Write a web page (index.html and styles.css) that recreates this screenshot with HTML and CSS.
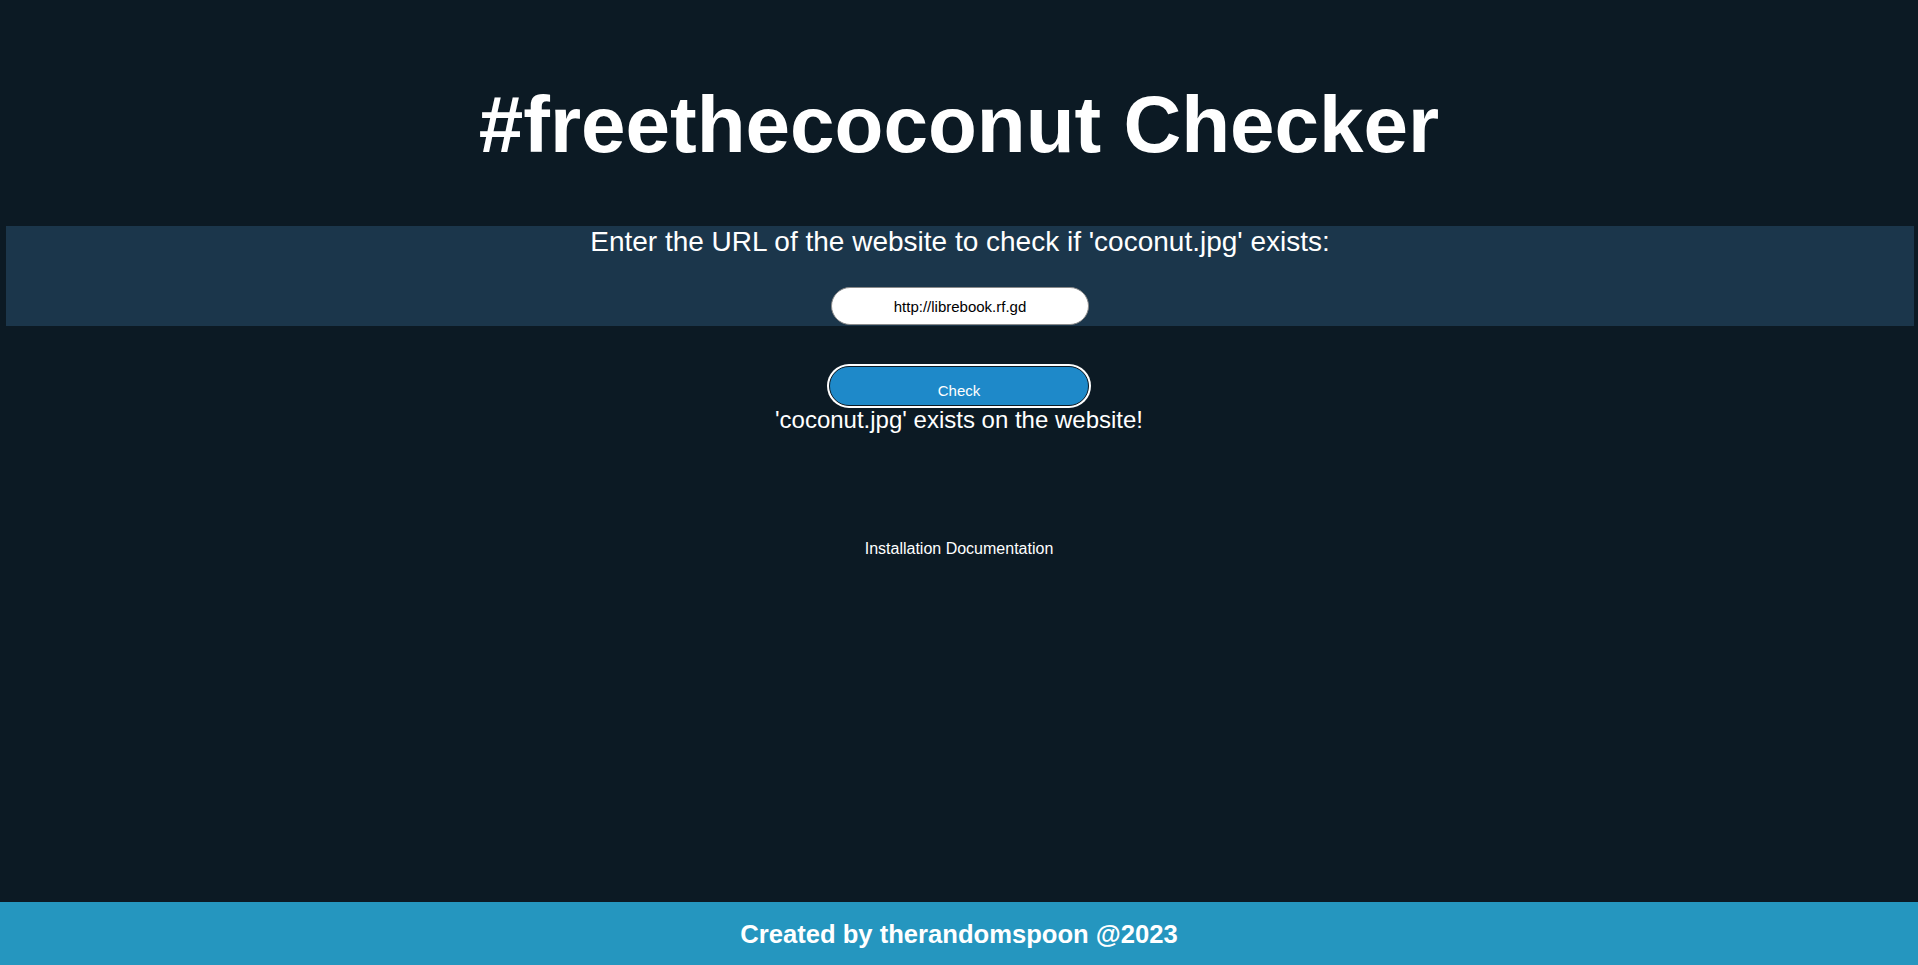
FILE: index.html
```html
<!DOCTYPE html>
<html lang="en">
<head>
<meta charset="utf-8">
<title>#freethecoconut Checker</title>
<link rel="stylesheet" href="styles.css">
</head>
<body>
<div class="page">
  <main class="main">
    <h1 class="title">#freethecoconut Checker</h1>
    <form class="band">
      <label class="prompt" for="url">Enter the URL of the website to check if 'coconut.jpg' exists:</label>
      <input class="url" id="url" type="text" value="http://librebook.rf.gd">
    </form>
    <button class="check" type="button">Check</button>
    <p class="result">'coconut.jpg' exists on the website!</p>
    <a class="docs" href="#">Installation Documentation</a>
  </main>
  <footer class="footer">
    <p class="credit">Created by therandomspoon @2023</p>
  </footer>
</div>
</body>
</html>
```

FILE: styles.css
```css
html, body {
  margin: 0;
  padding: 0;
}

body {
  background: #0c1a24;
  color: #ffffff;
  font-family: "Liberation Sans", Arial, sans-serif;
}

.page {
  min-height: 100vh;
  display: flex;
  flex-direction: column;
}

.main {
  flex: 1;
  display: flex;
  flex-direction: column;
  align-items: center;
}

.title {
  margin: 79px 0 0;
  font-size: 80px;
  line-height: 92px;
  font-weight: bold;
  text-align: center;
}

.band {
  align-self: stretch;
  margin: 55px 4px 0 6px;
  padding: 0 0 1px;
  background: #1b364b;
  display: flex;
  flex-direction: column;
  align-items: center;
}

.prompt {
  font-size: 28px;
  line-height: 32px;
  color: #ffffff;
}

.url {
  margin-top: 29px;
  box-sizing: border-box;
  width: 258px;
  height: 38px;
  border: 1px solid #8a8a8a;
  border-radius: 19px;
  background: #ffffff;
  color: #000000;
  font-family: "Liberation Sans", Arial, sans-serif;
  font-size: 15px;
  text-align: center;
  padding: 0 10px;
  outline: none;
}

.check {
  margin-top: 40px;
  box-sizing: border-box;
  width: 260px;
  height: 40px;
  padding: 15px 0 6px;
  border: 1px solid #0c1a24;
  border-radius: 20px;
  box-shadow: 0 0 0 2px #ffffff;
  background: #1e89c9;
  color: #ffffff;
  font-family: "Liberation Sans", Arial, sans-serif;
  font-size: 15px;
  line-height: 17px;
  cursor: pointer;
}

.result {
  margin: 0;
  font-size: 24px;
  line-height: 28px;
}

.docs {
  margin-top: 106px;
  font-size: 16px;
  line-height: 18px;
  color: #ffffff;
  text-decoration: none;
}

.footer {
  height: 63px;
  background: #2596bf;
  display: flex;
  align-items: center;
  justify-content: center;
}

.credit {
  margin: 0;
  font-size: 25.6px;
  line-height: 30px;
  font-weight: bold;
}
```
